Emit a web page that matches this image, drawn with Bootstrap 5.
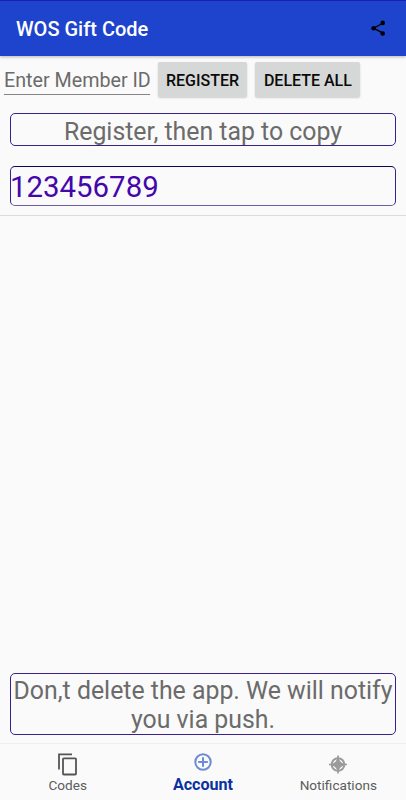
<!DOCTYPE html>
<html lang="en">
<head>
<meta charset="utf-8">
<meta name="viewport" content="width=device-width, initial-scale=1">
<title>WOS Gift Code</title>
<link href="https://cdn.jsdelivr.net/npm/bootstrap@5.3.0/dist/css/bootstrap.min.css" rel="stylesheet">
<style>
body{font-family:Roboto,"Liberation Sans",sans-serif;background:#fafafa;height:800px;overflow:hidden}
svg{display:block}
.app-bar{height:56px;background:#1e44cd;border-top:1px solid #1a1fb0;box-shadow:0 1px 3px rgba(0,0,0,.28);padding:0 15px 0 16px}
.app-title{font-size:20px;font-weight:500;line-height:24px;color:#fff}
.share-btn{width:24px;height:24px;padding:0;border:0;margin-top:-1px}
.entry-row{height:47px;padding:5px 4px 0;margin-top:1px}
.member-input{width:146px;height:33px;padding:5px 0 0;border:0;border-bottom:1px solid #858585;border-radius:0;background:transparent;font-size:19.7px;line-height:27px;color:#666}
.member-input::placeholder{color:#6b6b6b;opacity:1}
.flat-btn{height:35px;border:0;border-radius:2px;background:#d6d8d7;color:#0a0a0a;font-size:16px;font-weight:500;line-height:37px;padding:0;box-shadow:0 1px 2px rgba(0,0,0,.18);white-space:nowrap}
.btn-register{width:89px;margin-left:8px}
.btn-delete{width:105px;margin-left:8.4px}
.outlined{border:1px solid #3a1f8f;border-radius:5px;margin:0 10px;color:#6b6b6b;font-size:24.85px;line-height:29px}
.hint-box{height:33px;margin-top:9px;padding-top:3px}
.member-box{height:40px;margin-top:20px;font-size:29.4px;line-height:40px;color:#4506ac;border-top-color:#160058;border-bottom-color:#6d5ca9;text-indent:-1px}
.list-line{height:1px;background:#dcdcdc;margin-top:9px}
.notice-box{height:62px;margin-bottom:8px;padding-top:2px;white-space:nowrap}
.tab-bar{height:57px;border-top:1px solid #eee;background:#fafafa}
.tab-link{padding:0;color:#5c5c5c;font-size:13.6px;line-height:16px}
.tab-icon{height:33px}
.tab-link.current{color:#0a319f;font-weight:700;font-size:16.1px}
</style>
<script src="https://cdn.jsdelivr.net/npm/bootstrap@5.3.0/dist/js/bootstrap.bundle.min.js"></script>
</head>
<body class="d-flex flex-column">
<header class="app-bar d-flex align-items-center justify-content-between flex-shrink-0">
  <h1 class="app-title mb-0">WOS Gift Code</h1>
  <button class="btn share-btn" type="button" aria-label="Share">
    <svg width="24" height="24" viewBox="0 0 24 24"><path d="M16.5 7 6.6 12.2l9.9 5.2" fill="none" stroke="#000" stroke-width="1.4"/><circle cx="6.6" cy="12.2" r="2.3"/><circle cx="15.7" cy="6.9" r="2.3"/><circle cx="15.7" cy="17.5" r="2.3"/></svg>
  </button>
</header>
<main class="d-flex flex-column flex-grow-1">
  <form class="entry-row d-flex">
    <input class="form-control member-input" type="text" placeholder="Enter Member ID" aria-label="Member ID">
    <button class="btn flat-btn btn-register" type="button">REGISTER</button>
    <button class="btn flat-btn btn-delete" type="button">DELETE ALL</button>
  </form>
  <div class="outlined hint-box text-center">Register, then tap to copy</div>
  <div class="outlined member-box">123456789</div>
  <div class="list-line"></div>
  <div class="outlined notice-box text-center mt-auto">Don,t delete the app. We will notify<br>you via push.</div>
</main>
<nav class="tab-bar nav nav-fill flex-nowrap flex-shrink-0">
  <a class="nav-link tab-link col-4" href="#">
    <div class="tab-icon d-flex justify-content-center"><svg width="24" height="33" viewBox="0 0 24 33" fill="none" stroke="#555" stroke-width="1.8"><path d="M3 25.5V10.4h13"/><rect x="7" y="14.3" width="13" height="16.2" rx=".8"/></svg></div>
    <div>Codes</div>
  </a>
  <a class="nav-link tab-link current col-4" href="#" aria-current="page">
    <div class="tab-icon d-flex justify-content-center"><svg width="24" height="33" viewBox="0 0 24 33" fill="none" stroke="#6f8bd6" stroke-width="2"><circle cx="12" cy="18" r="7.7"/><path d="M12 13.2v9.6M7.2 18h9.6"/></svg></div>
    <div>Account</div>
  </a>
  <a class="nav-link tab-link col-4" href="#">
    <div class="tab-icon d-flex justify-content-center"><svg width="24" height="33" viewBox="0 0 24 33" fill="none" stroke="#9b9b9b"><circle cx="12" cy="20.5" r="6.3" stroke-width="2.1"/><path d="M12 11.5v18M3 20.5h18" stroke-width="1.7"/><path d="M12 15.2q1.6 3.7 5.3 5.3-3.7 1.6-5.3 5.3-1.6-3.7-5.3-5.3 3.7-1.6 5.3-5.3z" fill="#9b9b9b" stroke-width="1.6"/></svg></div>
    <div>Notifications</div>
  </a>
</nav>
</body>
</html>
